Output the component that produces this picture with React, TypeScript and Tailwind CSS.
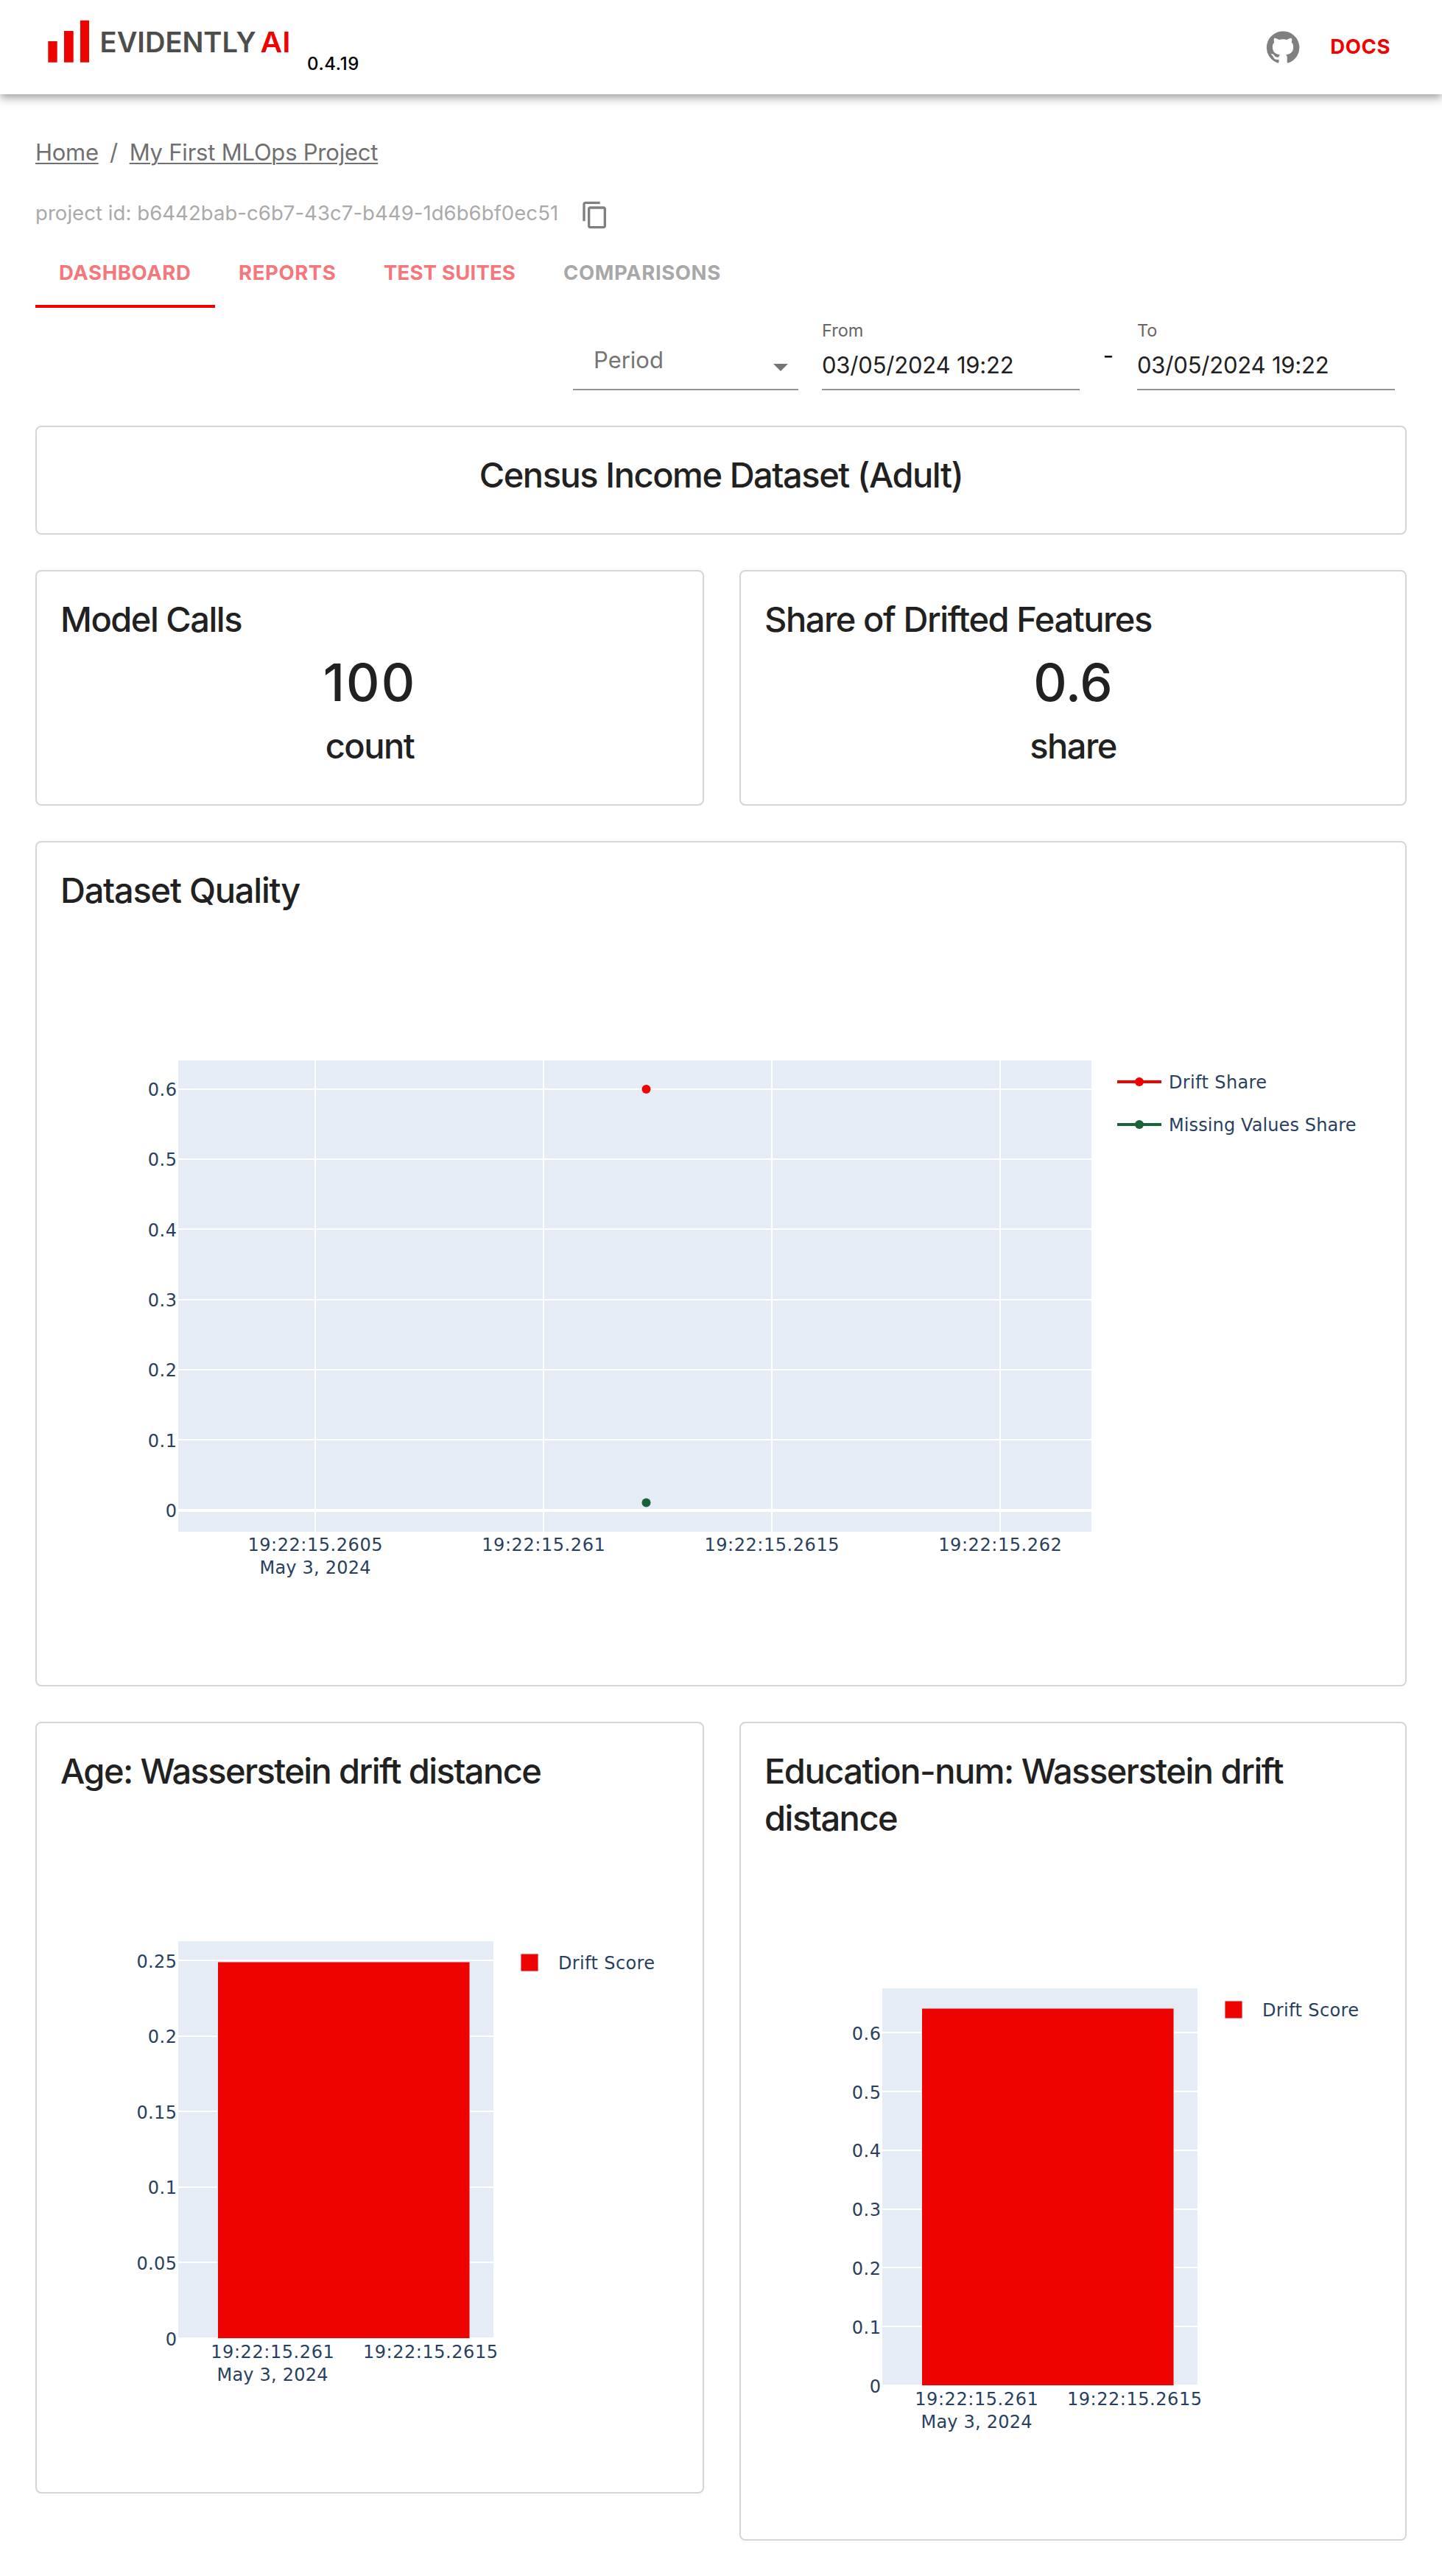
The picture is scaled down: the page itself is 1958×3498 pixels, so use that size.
import type { ReactNode } from "react";

const INK = "#2a3f5f";
const RED = "#ed0400";
const GREEN = "#1a6338";
const PLOT_BG = "#e5ecf6";
const CHART_FONT = 'Verdana, "DejaVu Sans", sans-serif';

type LabelProps = {
  x: number;
  y: number;
  width: number;
  anchor?: "start" | "middle" | "end";
  children: string;
};

function Label({ x, y, width, anchor = "start", children }: LabelProps) {
  return (
    <text
      x={x}
      y={y}
      textAnchor={anchor}
      textLength={width}
      lengthAdjust="spacing"
      fontFamily={CHART_FONT}
      fontSize={24}
      fill={INK}
    >
      {children}
    </text>
  );
}

/* Advance width of a numeric tick label: digits are 15.26 wide, the point 8.74. */
const tickWidth = (t: string) => (t.length === 1 ? 15.3 : (t.length - 1) * 15.26 + 8.74);

function Card({ title, tracking, children }: { title: string; tracking: string; children: ReactNode }) {
  return (
    <section className="rounded-lg border-2 border-[#d6d6d6] p-8">
      <h2 className={`-mb-0.5 text-[47px] font-[540] leading-[66px] ${tracking}`}>{title}</h2>
      {children}
    </section>
  );
}

function Stat({ value, valueTracking, label }: { value: string; valueTracking: string; label: string }) {
  return (
    <div className="pb-3.5 text-center font-[540]">
      <div className={`text-[70.5px] leading-[109px] ${valueTracking}`}>{value}</div>
      <div className="-mt-px text-[47px] leading-[66px] tracking-[-1.5px]">{label}</div>
    </div>
  );
}

function QualityChart() {
  const yTicks = ["0.6", "0.5", "0.4", "0.3", "0.2", "0.1"];
  const xTicks: [string, number, number][] = [
    ["19:22:15.2605", 346, 183],
    ["19:22:15.261", 656, 167.5],
    ["19:22:15.2615", 966, 183],
    ["19:22:15.262", 1276, 167.5],
  ];
  return (
    <svg className="block" width="1794" height="1016" viewBox="0 0 1794 1016">
      <rect x="160" y="200" width="1240" height="640" fill={PLOT_BG} />
      {xTicks.map(([t, x]) => (
        <rect key={t} x={x - 1} y="200" width="2" height="640" fill="#fff" />
      ))}
      {yTicks.map((t, i) => (
        <rect key={t} x="160" y={Math.round(238.8 + i * 95.3) - 1} width="1240" height="2" fill="#fff" />
      ))}
      <rect x="160" y="809" width="1240" height="4" fill="#fff" />
      {yTicks.concat("0").map((t, i) => (
        <Label key={t} x={158} y={248 + i * 95.3} width={tickWidth(t)} anchor="end">
          {t}
        </Label>
      ))}
      {xTicks.map(([t, x, w]) => (
        <Label key={t} x={x} y={866} width={w} anchor="middle">
          {t}
        </Label>
      ))}
      <Label x={346} y={897} width={151} anchor="middle">
        May 3, 2024
      </Label>
      <circle cx="795.5" cy="239" r="6" fill={RED} />
      <circle cx="795.5" cy="800.5" r="6" fill={GREEN} />
      <path d="M1435 229h60" stroke={RED} strokeWidth="4" />
      <circle cx="1465" cy="229" r="6" fill={RED} />
      <Label x={1505} y={238} width={133}>
        Drift Share
      </Label>
      <path d="M1435 287h60" stroke={GREEN} strokeWidth="4" />
      <circle cx="1465" cy="287" r="6" fill={GREEN} />
      <Label x={1505} y={296} width={254.5}>
        Missing Values Share
      </Label>
    </svg>
  );
}

function DriftChart({ ticks, step, barTop }: { ticks: string[]; step: number; barTop: number }) {
  return (
    <svg className="block" width="838" height="916" viewBox="0 0 838 916">
      <rect x="160" y="200" width="428" height="540" fill={PLOT_BG} />
      {ticks.map((t, i) => (
        <rect key={t} x="160" y={Math.round(739 - i * step) - 1} width="428" height="2" fill="#fff" />
      ))}
      <rect x="213.5" y={barTop} width="342.5" height={739.5 - barTop} fill={RED} stroke={PLOT_BG} strokeWidth="1" />
      {ticks.map((t, i) => (
        <Label key={t} x={158} y={748.5 - i * step} width={tickWidth(t)} anchor="end">
          {t}
        </Label>
      ))}
      <Label x={288} y={766} width={167.5} anchor="middle">
        19:22:15.261
      </Label>
      <Label x={502.5} y={766} width={183} anchor="middle">
        19:22:15.2615
      </Label>
      <Label x={288} y={797} width={151} anchor="middle">
        May 3, 2024
      </Label>
      <rect x="625" y="217" width="24" height="24" fill={RED} stroke={PLOT_BG} strokeWidth="1" />
      <Label x={676} y={238} width={131}>
        Drift Score
      </Label>
    </svg>
  );
}

function Logo() {
  return (
    <svg className="block" width="340" height="64" viewBox="60 24 340 64" fontFamily="Inter, sans-serif" fontSize="38.5" fontWeight="560">
      <g fill={RED}>
        <rect x="65.3" y="56" width="12.4" height="28.7" />
        <rect x="87" y="42" width="12.7" height="42.7" />
        <rect x="109" y="27.7" width="12" height="57" />
      </g>
      <text x="135.6" y="71" textLength="212" lengthAdjust="spacingAndGlyphs" fill="#4d4d4d">
        EVIDENTLY
      </text>
      <text x="353.5" y="71" textLength="41" lengthAdjust="spacingAndGlyphs" fill={RED}>
        AI
      </text>
    </svg>
  );
}

function DateField({ label, value }: { label: string; value: string }) {
  return (
    <div className="flex h-24 w-[350px] flex-col border-b-2 border-[#949494]">
      <span className="text-[23.5px] leading-[29px] text-[#666]">{label}</span>
      <span className="text-[31px] leading-[65px] tracking-[-0.2px]">{value}</span>
    </div>
  );
}

export default function App() {
  return (
    <div className="min-h-[3498px] w-[1958px] bg-white font-[Inter,sans-serif] text-[#212121]">
      <header className="flex h-32 items-center pl-[60px] pr-[70px] shadow-[0_4px_8px_-2px_rgba(0,0,0,0.2),0_8px_10px_0_rgba(0,0,0,0.14),0_2px_20px_0_rgba(0,0,0,0.12)]">
        <div className="mb-4 flex h-16 items-center">
          <Logo />
        </div>
        <span className="mt-[46px] pl-[17px] text-[24px] font-medium leading-none tracking-[0.6px] text-black">0.4.19</span>
        <svg className="ml-auto block size-12" viewBox="0 0 24 24" fill="#808080">
          <path d="M12 1.27a11 11 0 00-3.48 21.46c.55.09.73-.28.73-.55v-1.84c-3.03.64-3.67-1.46-3.67-1.46-.55-1.29-1.28-1.65-1.28-1.65-.92-.65.1-.65.1-.65 1.1 0 1.73 1.1 1.73 1.1.92 1.65 2.57 1.2 3.21.92a2 2 0 01.64-1.47c-2.47-.27-5.04-1.19-5.04-5.5 0-1.1.46-2.1 1.2-2.84a3.76 3.76 0 010-2.93s.91-.28 3.11 1.1c1.8-.49 3.7-.49 5.5 0 2.1-1.38 3.02-1.1 3.02-1.1a3.76 3.76 0 01.1 2.93c.83.74 1.2 1.74 1.2 2.94 0 4.21-2.57 5.13-5.04 5.4.45.37.82.92.82 2.02v3.03c0 .27.1.64.73.55A11 11 0 0012 1.27" />
        </svg>
        <a className="ml-10 text-[27.5px] font-bold leading-none tracking-[0.6px] text-[#ed0400]">DOCS</a>
      </header>

      <main className="px-12 pt-[55px]">
        <nav className="flex h-12 items-center text-[31px] text-[#707070]">
          <a className="tracking-[-0.3px] underline decoration-2 underline-offset-[3px]">Home</a>
          <span className="w-[42px] text-center">/</span>
          <a className="tracking-[-0.22px] underline decoration-2 underline-offset-[3px]">My First MLOps Project</a>
        </nav>

        <div className="mt-[41px] flex h-10">
          <span className="w-[740px] whitespace-nowrap text-[27.5px] leading-[35px] tracking-[0.06px] text-[#aaa]">
            project id: b6442bab-c6b7-43c7-b449-1d6b6bf0ec51
          </span>
          <svg className="block size-10" viewBox="0 0 24 24" fill="#808080">
            <path d="M16 1H4c-1.1 0-2 .9-2 2v14h2V3h12V1zm3 4H8c-1.1 0-2 .9-2 2v14c0 1.1.9 2 2 2h11c1.1 0 2-.9 2-2V7c0-1.1-.9-2-2-2zm0 16H8V7h11v14z" />
          </svg>
        </div>

        <div className="mt-2.5 flex h-24 text-[27.5px] font-[650] leading-[97px] text-[#f4777c]">
          <span className="h-24 w-[244px] border-b-4 border-[#ed0400] pl-8 tracking-[0.6px]">DASHBOARD</span>
          <span className="w-[197px] pl-8 tracking-[0.6px]">REPORTS</span>
          <span className="w-[244px] pl-8 tracking-[0.2px]">TEST SUITES</span>
          <span className="pl-8 tracking-[0.6px] text-[#a8a8a8]">COMPARISONS</span>
        </div>

        <div className="mt-4 flex h-24 justify-end pr-4">
          <div className="mr-8 flex w-[306px] items-center justify-between border-b-2 border-[#949494] pl-7 text-[31px] text-[#757575]">
            <span className="pt-4">Period</span>
            <svg className="mt-[34px] block size-12" viewBox="0 0 24 24" fill="#757575">
              <path d="M7 10l5 5 5-5z" />
            </svg>
          </div>
          <DateField label="From" value="03/05/2024 19:22" />
          <span className="w-[78px] text-center text-[31px] leading-[97px] text-black">-</span>
          <DateField label="To" value="03/05/2024 19:22" />
        </div>

        <div className="mt-12 flex flex-col gap-12">
          <section className="h-[148px] rounded-lg border-2 border-[#d6d6d6] pt-8 text-center">
            <h1 className="text-[47px] font-[540] leading-[66px] tracking-[-1.45px]">Census Income Dataset (Adult)</h1>
          </section>
          <div className="grid grid-cols-[908px_906px] gap-12">
            <Card title="Model Calls" tracking="tracking-[-1.5px]">
              <Stat value="100" valueTracking="tracking-[2px]" label="count" />
            </Card>
            <Card title="Share of Drifted Features" tracking="tracking-[-1.45px]">
              <Stat value="0.6" valueTracking="tracking-[0px]" label="share" />
            </Card>
          </div>
          <Card title="Dataset Quality" tracking="tracking-[-1.25px]">
            <QualityChart />
          </Card>
          <div className="grid grid-cols-[908px_906px] items-start gap-12">
            <Card title="Age: Wasserstein drift distance" tracking="tracking-[-1.6px]">
              <DriftChart ticks={["0", "0.05", "0.1", "0.15", "0.2", "0.25"]} step={102.6} barTop={228} />
            </Card>
            <section className="rounded-lg border-2 border-[#d6d6d6] p-8">
              <h2 className="translate-y-px text-[47px] font-[540] leading-[64px] tracking-[-1.5px]">
                Education-num: Wasserstein drift distance
              </h2>
              <DriftChart ticks={["0", "0.1", "0.2", "0.3", "0.4", "0.5", "0.6"]} step={79.8} barTop={227} />
            </section>
          </div>
        </div>
      </main>
    </div>
  );
}
